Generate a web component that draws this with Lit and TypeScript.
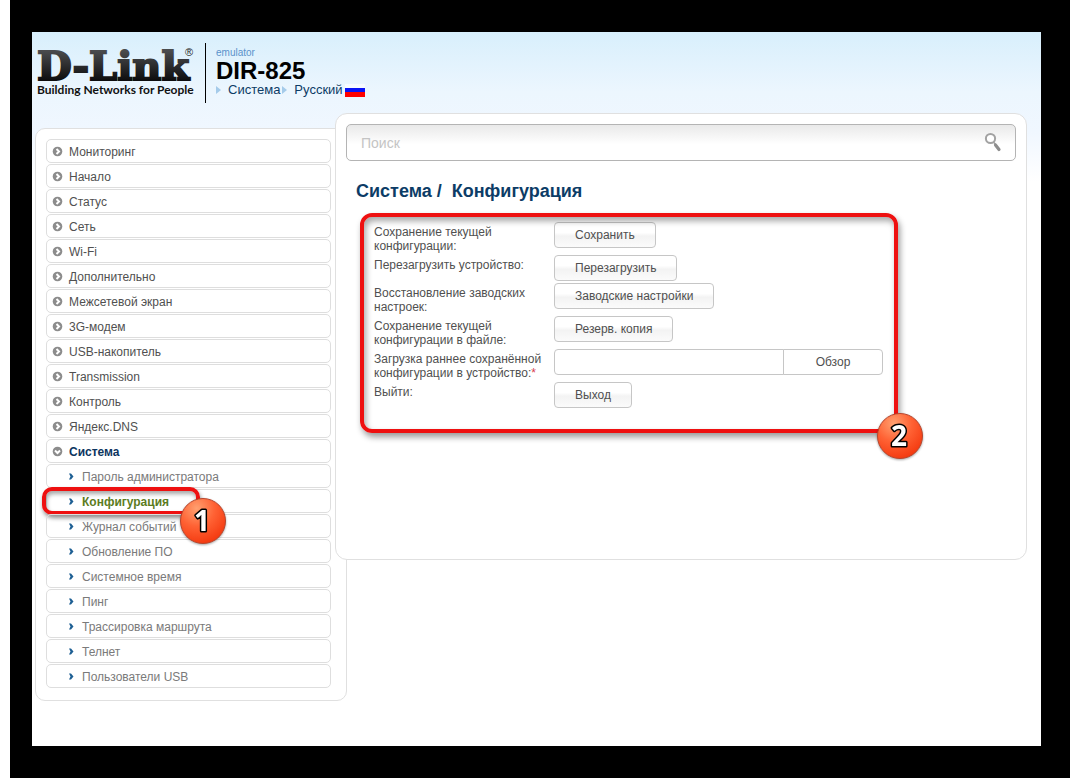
import { LitElement, html, css, svg } from "lit";
import { customElement, property, state } from "lit/decorators.js";
import { classMap } from "lit/directives/class-map.js";

type Section = { title: string; open?: boolean; pages?: string[] };

const sections: Section[] = [
  { title: "Мониторинг" },
  { title: "Начало" },
  { title: "Статус" },
  { title: "Сеть" },
  { title: "Wi-Fi" },
  { title: "Дополнительно" },
  { title: "Межсетевой экран" },
  { title: "3G-модем" },
  { title: "USB-накопитель" },
  { title: "Transmission" },
  { title: "Контроль" },
  { title: "Яндекс.DNS" },
  {
    title: "Система",
    open: true,
    pages: [
      "Пароль администратора",
      "Конфигурация",
      "Журнал событий",
      "Обновление ПО",
      "Системное время",
      "Пинг",
      "Трассировка маршрута",
      "Телнет",
      "Пользователи USB",
    ],
  },
];

@customElement("step-badge")
export class StepBadge extends LitElement {
  @property() number = "1";

  static styles = css`
    :host {
      display: block;
      width: 48px;
      height: 48px;
    }
    .badge {
      display: block;
      filter: drop-shadow(0 1px 1px rgba(0, 0, 0, 0.35));
    }
    .digit {
      font: 700 28px "Noto Sans", "Open Sans", sans-serif;
      fill: #fff;
      stroke: #000;
      stroke-width: 3px;
      stroke-linejoin: round;
      paint-order: stroke;
    }
  `;

  render() {
    return html`<svg class="badge" width="48" height="48" viewBox="0 0 48 48" role="img" aria-label=${this.number}>
      <defs>
        <radialGradient id="fill" cx="0.36" cy="0.22" r="0.8">
          <stop offset="0" stop-color="#ffa070" />
          <stop offset="0.5" stop-color="#ff6234" />
          <stop offset="1" stop-color="#f43a10" />
        </radialGradient>
      </defs>
      <circle cx="24" cy="24" r="22.5" fill="url(#fill)" stroke="#b8452c" />
      <text class="digit" x="23" y="34" text-anchor="middle">${this.number}</text>
    </svg>`;
  }
}

@customElement("app-header")
export class AppHeader extends LitElement {
  static styles = css`
    :host {
      display: flex;
      padding: 11px 5px 10px;
    }
    .logo {
      display: block;
    }
    .wordmark {
      font: 700 40px "DejaVu Serif", serif;
      fill: url(#ink);
      stroke: url(#ink);
      stroke-width: 2px;
    }
    .tagline {
      font: 700 12px Lato, sans-serif;
      fill: #111;
    }
    .mark {
      font: 11px "Liberation Sans", sans-serif;
      fill: #222;
    }
    .device {
      margin-left: 8px;
      padding: 4px 0 0 10px;
      border-left: 1px solid #000;
    }
    .mode {
      font-size: 10px;
      line-height: 12px;
      color: #5b92cb;
    }
    .model {
      margin: 0;
      font-size: 24px;
      line-height: 23px;
      color: #000;
    }
    .links {
      display: flex;
      align-items: center;
      font-size: 13px;
      line-height: 16px;
    }
    .link {
      display: flex;
      align-items: center;
      gap: 7px;
      margin-right: 2px;
      color: #0c3c66;
      text-decoration: none;
    }
    .link::before {
      content: "";
      border: 4px solid transparent;
      border-left: 5px solid #a5cbea;
      border-right: 0;
    }
    .flag {
      display: block;
    }
  `;

  render() {
    return html`
      <svg class="logo" width="160" height="60" viewBox="0 0 160 60" role="img" aria-label="D-Link">
        <defs>
          <linearGradient id="ink" gradientUnits="userSpaceOnUse" x1="0" y1="8" x2="0" y2="38">
            <stop offset="0" stop-color="#4a4b4d" />
            <stop offset="1" stop-color="#0c0c0d" />
          </linearGradient>
        </defs>
        <text class="wordmark" x="0" y="37">D-Link</text>
        <text class="mark" x="148" y="13">®</text>
        <text class="tagline" x="0" y="51">Building Networks for People</text>
      </svg>
      <div class="device">
        <div class="mode">emulator</div>
        <h1 class="model">DIR-825</h1>
        <nav class="links">
          <a class="link" href="#system">Система</a>
          <a class="link" href="#language">Русский</a>
          <svg class="flag" width="20" height="13" viewBox="0 0 20 13" aria-hidden="true">
            <path d="M0 0h20v5H0z" fill="#fff" fill-opacity="0.6" />
            <path d="M0 4h20v5H0z" fill="#0a14f5" />
            <path d="M0 8h20v5H0z" fill="#f00" />
          </svg>
        </nav>
      </div>
    `;
  }
}

@customElement("side-menu")
export class SideMenu extends LitElement {
  @state() current = "Конфигурация";

  static styles = css`
    :host {
      display: block;
      box-sizing: border-box;
      padding: 10px 15px 12px 10px;
      border: 1px solid #e0e0e0;
      border-radius: 10px;
      background: #fff;
    }
    .list {
      display: grid;
      gap: 1px;
      margin: 0;
      padding: 0;
      list-style: none;
    }
    .pages {
      margin-top: 1px;
    }
    .entry {
      position: relative;
    }
    .item {
      display: flex;
      align-items: center;
      gap: 6px;
      box-sizing: border-box;
      height: 24px;
      padding: 0 5px;
      border: 1px solid #dedede;
      border-radius: 5px;
      font-size: 12px;
      color: #505050;
      text-decoration: none;
    }
    .text {
      padding-top: 2px;
    }
    .item.open {
      font-weight: 700;
      color: #0c3560;
    }
    .item.page {
      gap: 8px;
      padding-left: 21px;
      color: #7a7a7a;
    }
    .item.current {
      font-weight: 700;
      color: #5c7c1e;
    }
    .icon {
      flex: none;
    }
    .outline {
      position: absolute;
      box-sizing: border-box;
      left: -4px;
      top: -2px;
      width: 158px;
      height: 28px;
      border: 4px solid #ee1010;
      border-radius: 10px;
      box-shadow: 1px 3px 4px rgba(0, 0, 0, 0.45), inset 1px 3px 4px rgba(0, 0, 0, 0.35);
      pointer-events: none;
    }
    .step {
      position: absolute;
      z-index: 1;
      left: 133px;
      top: 8px;
    }
  `;

  private arrow(open?: boolean) {
    const direction = open ? "M3 4.5 5.5 7 8 4.5" : "M4.5 3 7 5.5 4.5 8";
    return html`<svg class="icon" width="11" height="11" viewBox="0 0 11 11" aria-hidden="true">
      ${svg`<circle cx="5.5" cy="5.5" r="4.8" fill="#8c8c8c" />
      <path d=${direction} fill="none" stroke="#fff" stroke-width="2" />`}
    </svg>`;
  }

  private bullet() {
    return html`<svg class="icon" width="6" height="7" viewBox="0 0 6 7" aria-hidden="true">
      <path d="M1 0.5H3L5.5 3.5 3 6.5H1L2.5 3.5z" fill="#1d5f93" />
    </svg>`;
  }

  private page(title: string) {
    const current = title === this.current;
    return html`<li class="entry">
      <a class=${classMap({ item: true, page: true, current })} href="#page" @click=${() => (this.current = title)}>
        ${this.bullet()}<span class="text">${title}</span>
      </a>
      ${title === "Конфигурация"
        ? html`<div class="outline"></div>
            <step-badge class="step" number="1"></step-badge>`
        : null}
    </li>`;
  }

  render() {
    return html`<ul class="list">
      ${sections.map(
        (s) => html`<li>
          <a class=${classMap({ item: true, open: !!s.open })} href="#section"
            >${this.arrow(s.open)}<span class="text">${s.title}</span></a
          >
          ${s.pages ? html`<ul class="list pages">${s.pages.map((p) => this.page(p))}</ul>` : null}
        </li>`,
      )}
    </ul>`;
  }
}

@customElement("config-page")
export class ConfigPage extends LitElement {
  static styles = css`
    :host {
      display: block;
      box-sizing: border-box;
      min-height: 447px;
      padding: 10px;
      border: 1px solid #e0e0e0;
      border-radius: 12px;
      background: #fff;
    }
    .search {
      display: flex;
      align-items: center;
      box-sizing: border-box;
      height: 37px;
      padding: 0 12px 0 14px;
      border: 1px solid #b4b4b4;
      border-radius: 5px;
      background: linear-gradient(#e9e9e9, #fff 55%);
    }
    .query {
      flex: 1;
      min-width: 0;
      padding: 0;
      border: 0;
      outline: 0;
      background: none;
      font: inherit;
      font-size: 14px;
    }
    .query::placeholder {
      color: #c4c4c4;
      opacity: 1;
    }
    .find {
      display: block;
      padding: 0;
      border: 0;
      background: none;
    }
    .glass {
      display: block;
    }
    .title {
      margin: 19px 10px 0;
      font-size: 18px;
      line-height: 22px;
      color: #0c3c66;
      white-space: pre-wrap;
    }
    .form {
      position: relative;
      display: grid;
      grid-template-columns: 170px auto;
      justify-content: start;
      column-gap: 10px;
      margin: 20px 28px 0;
    }
    .label {
      padding: 3px 0 2px;
      line-height: 14px;
    }
    .required {
      color: #d84050;
    }
    .control {
      display: flex;
      padding-bottom: 2px;
    }
    .button,
    .file {
      box-sizing: border-box;
      height: 26px;
      border: 1px solid #c6c6c6;
      border-radius: 4px;
      font: inherit;
      color: #505050;
    }
    .button {
      padding: 0 20px;
      background: linear-gradient(#fff 40%, #f3f3f3 55%, #fbfbfb);
    }
    .file {
      width: 230px;
      padding: 0 6px;
      border-radius: 4px 0 0 4px;
      background: #fff;
    }
    .browse {
      width: 100px;
      margin-left: -1px;
      border-radius: 0 4px 4px 0;
      background: #fff;
    }
    .outline {
      position: absolute;
      box-sizing: border-box;
      left: -14px;
      top: -9px;
      width: 538px;
      height: 220px;
      border: 4px solid #ee1010;
      border-radius: 12px;
      box-shadow: 2px 4px 6px rgba(0, 0, 0, 0.4), inset 2px 4px 6px rgba(0, 0, 0, 0.35);
      pointer-events: none;
    }
    .step {
      position: absolute;
      left: 502px;
      top: 190px;
    }
  `;

  private action(id: string, label: string, text: string) {
    return html`<label class="label" for=${id}>${label}</label>
      <div class="control"><button class="button" id=${id} type="button">${text}</button></div>`;
  }

  render() {
    return html`
      <form class="search" role="search">
        <input class="query" type="search" placeholder="Поиск" aria-label="Поиск" />
        <button class="find" type="button" aria-label="Поиск">
          <svg class="glass" width="20" height="22" viewBox="0 0 20 22" aria-hidden="true">
            <circle cx="7.5" cy="6.5" r="4.6" fill="#fff" stroke="#a2a2a2" stroke-width="2" />
            <path d="M10.5 10 12.5 12.500" stroke="#a2a2a2" stroke-width="1.500" />
            <path d="M12.5 13 16 17.500" stroke="#8e8e8e" stroke-width="3.200" stroke-linecap="round" />
          </svg>
        </button>
      </form>
      <h2 class="title">Система /  Конфигурация</h2>
      <form class="form">
        ${this.action("save", "Сохранение текущей конфигурации:", "Сохранить")}
        ${this.action("reboot", "Перезагрузить устройство:", "Перезагрузить")}
        ${this.action("factory", "Восстановление заводских настроек:", "Заводские настройки")}
        ${this.action("backup", "Сохранение текущей конфигурации в файле:", "Резерв. копия")}
        <label class="label" for="upload"
          >Загрузка раннее сохранённой конфигурации в устройство:<span class="required">*</span></label
        >
        <div class="control">
          <input class="file" id="upload" type="text" />
          <button class="button browse" type="button">Обзор</button>
        </div>
        ${this.action("logout", "Выйти:", "Выход")}
        <div class="outline"></div>
        <step-badge class="step" number="2"></step-badge>
      </form>
    `;
  }
}

@customElement("app-root")
export class AppRoot extends LitElement {
  static styles = css`
    :host {
      display: block;
      padding: 0 3px 0 10px;
      background: #fff;
      font: 12px "Liberation Sans", Arial, sans-serif;
      color: #505050;
    }
    .frame {
      display: flex;
      box-sizing: border-box;
      min-height: 100vh;
      padding: 32px 29px 32px 22px;
      background: #000;
    }
    .screen {
      flex: 1;
      min-width: 0;
      background: #fff linear-gradient(#d8effc, #ecf6fe 60px, #f0f7ff 100px, #fff 150px);
    }
    .layout {
      display: flex;
      align-items: flex-start;
      padding: 0 14px 0 3px;
    }
    .menu {
      flex: 0 0 312px;
      margin-top: 15px;
    }
    .content {
      flex: 1;
      min-width: 0;
      margin-left: -12px;
    }
    .menu,
    .content {
      position: relative;
    }
  `;

  render() {
    return html`<div class="frame">
      <div class="screen">
        <app-header></app-header>
        <div class="layout">
          <side-menu class="menu"></side-menu>
          <config-page class="content"></config-page>
        </div>
      </div>
    </div>`;
  }
}
